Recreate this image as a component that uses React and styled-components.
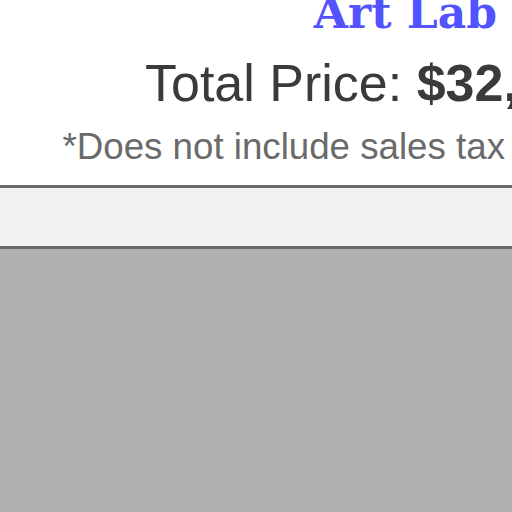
import React from "react";
import styled, { createGlobalStyle } from "styled-components";

const GlobalStyle = createGlobalStyle`
  html, body {
    margin: 0;
    padding: 0;
    background: #ffffff;
    overflow: hidden;
  }
`;

const App = () => {
  return (
    <Page>
      <GlobalStyle />
      <Header>
        <Brand>Art Lab</Brand>
        <PriceLine>
          Total Price: <Amount>$32,000</Amount>
        </PriceLine>
        <TaxNote>*Does not include sales tax</TaxNote>
      </Header>
      <Toolbar />
      <Content />
    </Page>
  );
};

export default App;

const Page = styled.div`
  display: flex;
  flex-direction: column;
  height: 100vh;
  width: 100vw;
  overflow: hidden;
`;

const Header = styled.div`
  display: flex;
  flex-direction: column;
  align-items: flex-end;
  height: 185px;
  box-sizing: border-box;
`;

const Brand = styled.div`
  margin-top: -10px;
  margin-right: 15px;
  font-family: "DejaVu Serif", serif;
  font-weight: 700;
  font-size: 44px;
  line-height: 45px;
  color: #5252ff;
`;

const PriceLine = styled.div`
  align-self: flex-start;
  margin-left: 145px;
  margin-top: 18px;
  white-space: nowrap;
  font-family: "Liberation Sans", Arial, sans-serif;
  font-size: 52px;
  line-height: 60px;
  color: #3a3a3a;
`;

const Amount = styled.span`
  font-weight: 700;
`;

const TaxNote = styled.div`
  margin-right: 7px;
  margin-top: 12px;
  white-space: nowrap;
  font-family: "Liberation Sans", Arial, sans-serif;
  font-size: 36.7px;
  line-height: 44px;
  color: #6a6a6a;
`;

const Toolbar = styled.div`
  height: 58px;
  background: #f2f2f2;
  border-top: 3px solid #6b6b6b;
  border-bottom: 3px solid #6b6b6b;
  flex-shrink: 0;
`;

const Content = styled.div`
  flex: 1;
  background: #b0b0b0;
`;
